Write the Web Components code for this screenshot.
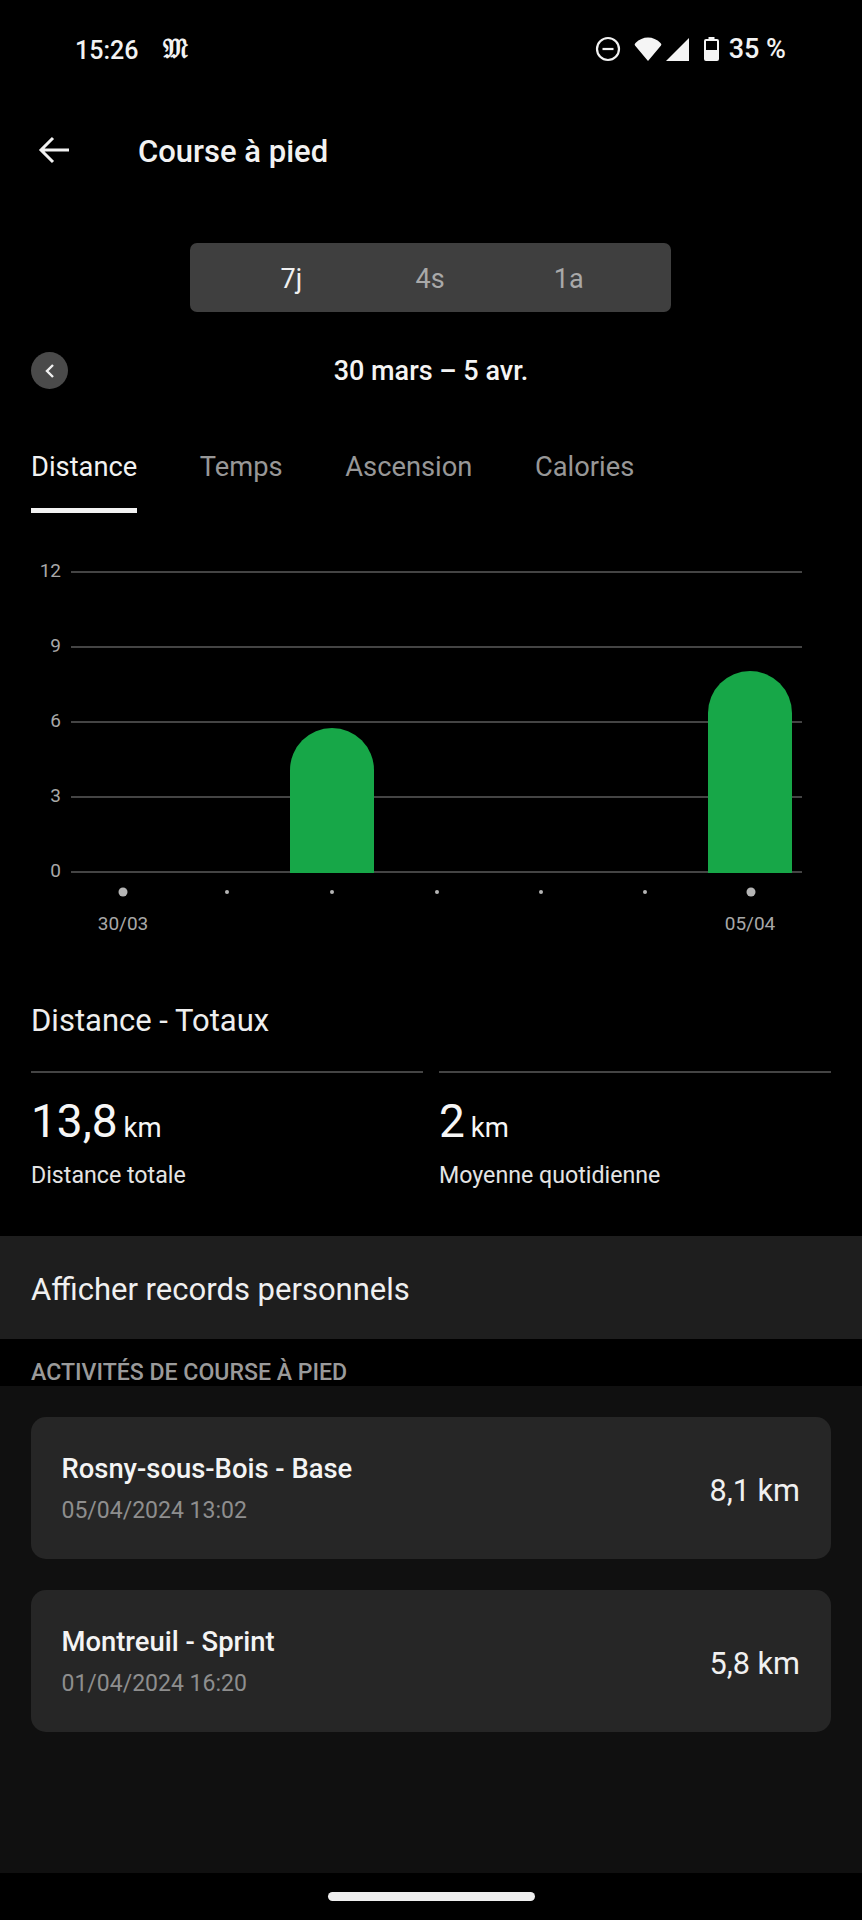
<!DOCTYPE html>
<html lang="fr">
<head>
<meta charset="utf-8">
<title>Course à pied</title>
<style>
    html, body { margin: 0; background: #000; }
    body { width: 862px; height: 1920px; overflow: hidden; color: #fff; font-family: Roboto, "Liberation Sans", sans-serif; }
</style>
</head>
<body>
<status-bar time="15:26" battery="35 %"></status-bar>
<app-header>Course à pied</app-header>
<range-selector></range-selector>
<date-nav>30 mars – 5 avr.</date-nav>
<metric-tabs></metric-tabs>
<distance-chart></distance-chart>
<totals-section heading="Distance - Totaux">
    <stat-tile value="13,8" unit="km">Distance totale</stat-tile>
    <stat-tile value="2" unit="km">Moyenne quotidienne</stat-tile>
</totals-section>
<records-link>Afficher records personnels</records-link>
<activity-list heading="ACTIVITÉS DE COURSE À PIED">
    <activity-card name="Rosny-sous-Bois - Base" date="05/04/2024 13:02" distance="8,1 km"></activity-card>
    <activity-card name="Montreuil - Sprint" date="01/04/2024 16:20" distance="5,8 km"></activity-card>
</activity-list>
<home-bar></home-bar>

<script>
// Barre d'etat Android
class StatusBar extends HTMLElement {
    constructor() {
        super();
        this.attachShadow({ mode: 'open' });
        this.shadowRoot.innerHTML = `
            <style>
                :host { display: flex; align-items: center; height: 98px; padding: 2px 76px 0 75px; font-size: 25px; font-weight: 500; color: #f2f2f2; box-sizing: border-box; }
                .logo { margin-left: 25px; font: 700 27px "DejaVu Serif", serif; width: 26px; margin-top: -2px; }
                .icons { margin-left: auto; display: flex; align-items: center; margin-top: -2px; }
                svg { display: block; }
                .pct { margin-left: 10px; font-size: 27px; }
            </style>
            <span>${this.getAttribute('time')}</span>
            <span class="logo">𝔐</span>
            <div class="icons">
                <svg width="26" height="26" viewBox="0 0 26 26"><circle cx="13" cy="13" r="11" fill="none" stroke="#f2f2f2" stroke-width="2.2"/><rect x="7.5" y="11.9" width="11" height="2.2" fill="#f2f2f2"/></svg>
                <svg style="margin-left:13px" width="28" height="24" viewBox="0 0 28 24"><path d="M14 24 L1 8.5 Q0 7 1.5 6 Q7 0.5 14 0.5 Q21 0.5 26.5 6 Q28 7 27 8.5 Z" fill="#f5f5f5"/></svg>
                <svg style="margin-left:4px" width="23" height="23" viewBox="0 0 23 23"><path d="M23 0 V23 H0 Z" fill="#f5f5f5"/></svg>
                <svg style="margin-left:15px" width="15" height="24" viewBox="0 0 15 24"><path d="M4.5 0 H10.5 V2 H13 Q15 2 15 4 V22 Q15 24 13 24 H2 Q0 24 0 22 V4 Q0 2 2 2 H4.5 Z M2 4 V13 H13 V4 Z" fill="#f5f5f5" fill-rule="evenodd"/></svg>
                <span class="pct">${this.getAttribute('battery')}</span>
            </div>
        `;
    }
}

// En-tete avec fleche retour
class AppHeader extends HTMLElement {
    constructor() {
        super();
        this.attachShadow({ mode: 'open' });
        this.shadowRoot.innerHTML = `
            <style>
                :host { display: flex; align-items: center; height: 104px; padding-left: 38px; font-size: 31px; font-weight: 500; color: #f2f2f2; }
                svg { width: 32px; height: 32px; margin-right: 68px; display: block; }
                span { padding-top: 3px; }
            </style>
            <svg viewBox="0 0 32 32"><path d="M31 16 H3 M15 4 L3 16 L15 28" fill="none" stroke="#f2f2f2" stroke-width="3"/></svg>
            <span><slot></slot></span>
        `;
    }
}

// Choix de la periode
class RangeSelector extends HTMLElement {
    constructor() {
        super();
        this.attachShadow({ mode: 'open' });
        this.shadowRoot.innerHTML = `
            <style>
                :host { display: flex; width: 481px; height: 69px; margin: 41px 0 0 190px; padding: 2px 33px 0 32px; box-sizing: border-box; background: #3f3f3f; border-radius: 7px; font-size: 27px; color: #a9a9a9; }
                span { flex: 1; display: flex; align-items: center; justify-content: center; }
                .on { color: #f0f0f0; }
            </style>
            <span class="on">7j</span><span>4s</span><span>1a</span>
        `;
    }
}

// Navigation entre les semaines
class DateNav extends HTMLElement {
    constructor() {
        super();
        this.attachShadow({ mode: 'open' });
        this.shadowRoot.innerHTML = `
            <style>
                :host { display: block; position: relative; height: 37px; margin: 40px 31px 0; font-size: 27px; font-weight: 500; line-height: 39px; text-align: center; color: #f4f4f4; }
                .back { position: absolute; left: 0; top: 0; width: 37px; height: 37px; border-radius: 50%; background: #4a4a4a; display: flex; align-items: center; justify-content: center; }
            </style>
            <div class="back"><svg width="12" height="16" viewBox="0 0 12 16"><path d="M9 2 L3 8 L9 14" fill="none" stroke="#f0f0f0" stroke-width="2.4"/></svg></div>
            <slot></slot>
        `;
    }
}

// Onglets de mesure
class MetricTabs extends HTMLElement {
    constructor() {
        super();
        this.attachShadow({ mode: 'open' });
        this.shadowRoot.innerHTML = `
            <style>
                :host { display: flex; gap: 62.6px; margin: 63px 0 0 31px; font-size: 27.3px; color: #979797; }
                span { display: block; height: 61px; line-height: 31px; }
                .on { color: #f2f2f2; height: 56px; border-bottom: 5px solid #f2f2f2; }
            </style>
            <span class="on">Distance</span><span>Temps</span><span>Ascension</span><span>Calories</span>
        `;
    }
}

// Graphique en barres, dessine en SVG
class DistanceChart extends HTMLElement {
    constructor() {
        super();
        this.attachShadow({ mode: 'open' });
        const top = 59; // y de la ligne 12 dans le svg
        const lines = [12, 9, 6, 3, 0].map((label, i) => {
            const y = top + i * 75;
            return `<line x1="71" x2="802" y1="${y}" y2="${y}" stroke="#444" stroke-width="2"/>
                <text x="61" y="${y + 5}" text-anchor="end">${label}</text>`;
        }).join('');
        const dots = [123, 227, 332, 437, 541, 645, 751].map((x, i) =>
            `<circle cx="${x}" cy="379" r="${i === 0 || i === 6 ? 4.5 : 2}" fill="#b5b5b5"/>`).join('');
        this.shadowRoot.innerHTML = `
            <style>
                :host { display: block; height: 477px; }
                svg { display: block; }
                text { font-size: 19px; fill: #a8a8a8; }
            </style>
            <svg width="862" height="477" viewBox="0 0 862 477">
                ${lines}
                <path d="M290 360 V257 A42 42 0 0 1 374 257 V360 Z" fill="#17a748"/>
                <path d="M708 360 V200 A42 42 0 0 1 792 200 V360 Z" fill="#17a748"/>
                ${dots}
                <text x="123" y="417" text-anchor="middle">30/03</text>
                <text x="750" y="417" text-anchor="middle">05/04</text>
            </svg>
        `;
    }
}

// Bloc des totaux
class TotalsSection extends HTMLElement {
    constructor() {
        super();
        this.attachShadow({ mode: 'open' });
        this.shadowRoot.innerHTML = `
            <style>
                :host { display: block; padding: 0 31px; height: 246px; box-sizing: border-box; }
                h2 { margin: 0; height: 81px; line-height: 62px; font-size: 31px; font-weight: 400; color: #eee; }
                .grid { display: grid; grid-template-columns: 392px 392px; gap: 16px; }
            </style>
            <h2>${this.getAttribute('heading')}</h2>
            <div class="grid"><slot></slot></div>
        `;
    }
}

class StatTile extends HTMLElement {
    constructor() {
        super();
        this.attachShadow({ mode: 'open' });
        this.shadowRoot.innerHTML = `
            <style>
                :host { display: block; border-top: 2px solid #444; padding-top: 19px; }
                .value { font-size: 46px; line-height: 58px; color: #f6f6f6; }
                .unit { font-size: 27.5px; margin-left: 6px; }
                .label { margin-top: 4px; font-size: 23.2px; line-height: 28px; color: #e4e4e4; }
            </style>
            <div class="value">${this.getAttribute('value')}<span class="unit">${this.getAttribute('unit')}</span></div>
            <div class="label"><slot></slot></div>
        `;
    }
}

class RecordsLink extends HTMLElement {
    constructor() {
        super();
        this.attachShadow({ mode: 'open' });
        this.shadowRoot.innerHTML = `
            <style>
                :host { display: flex; align-items: center; height: 103px; box-sizing: border-box; padding: 3px 0 0 31px; background: #1e1e1e; font-size: 31px; color: #f0f0f0; }
            </style>
            <slot></slot>
        `;
    }
}

// Liste des activites
class ActivityList extends HTMLElement {
    constructor() {
        super();
        this.attachShadow({ mode: 'open' });
        this.shadowRoot.innerHTML = `
            <style>
                :host { display: block; }
                h3 { margin: 0; height: 47px; padding: 21px 0 0 31px; box-sizing: border-box; line-height: 26px; font-size: 23.1px; font-weight: 500; color: #9a9a9a; overflow: hidden; }
                .panel { height: 487px; box-sizing: border-box; padding: 31px; background: #101010; display: flex; flex-direction: column; gap: 31px; }
            </style>
            <h3>${this.getAttribute('heading')}</h3>
            <div class="panel"><slot></slot></div>
        `;
    }
}

class ActivityCard extends HTMLElement {
    constructor() {
        super();
        this.attachShadow({ mode: 'open' });
        this.shadowRoot.innerHTML = `
            <style>
                :host { display: flex; align-items: center; justify-content: space-between; height: 142px; padding: 0 31px 0 30.5px; box-sizing: border-box; background: #262626; border-radius: 15px; }
                .info { padding-top: 2px; }
                .name { font-size: 27.4px; font-weight: 500; line-height: 32px; color: #f4f4f4; }
                .date { margin-top: 12px; font-size: 23px; line-height: 28px; color: #8e8e8e; }
                .distance { font-size: 30.7px; color: #f0f0f0; padding-top: 4px; }
            </style>
            <div class="info">
                <div class="name">${this.getAttribute('name')}</div>
                <div class="date">${this.getAttribute('date')}</div>
            </div>
            <div class="distance">${this.getAttribute('distance')}</div>
        `;
    }
}

class HomeBar extends HTMLElement {
    constructor() {
        super();
        this.attachShadow({ mode: 'open' });
        this.shadowRoot.innerHTML = `
            <style>
                :host { display: flex; justify-content: center; padding-top: 19px; }
                div { width: 207px; height: 9px; border-radius: 5px; background: #eee; }
            </style>
            <div></div>
        `;
    }
}

// Registra los componentes
customElements.define('status-bar', StatusBar);
customElements.define('app-header', AppHeader);
customElements.define('range-selector', RangeSelector);
customElements.define('date-nav', DateNav);
customElements.define('metric-tabs', MetricTabs);
customElements.define('distance-chart', DistanceChart);
customElements.define('totals-section', TotalsSection);
customElements.define('stat-tile', StatTile);
customElements.define('records-link', RecordsLink);
customElements.define('activity-list', ActivityList);
customElements.define('activity-card', ActivityCard);
customElements.define('home-bar', HomeBar);
</script>
</body>
</html>
